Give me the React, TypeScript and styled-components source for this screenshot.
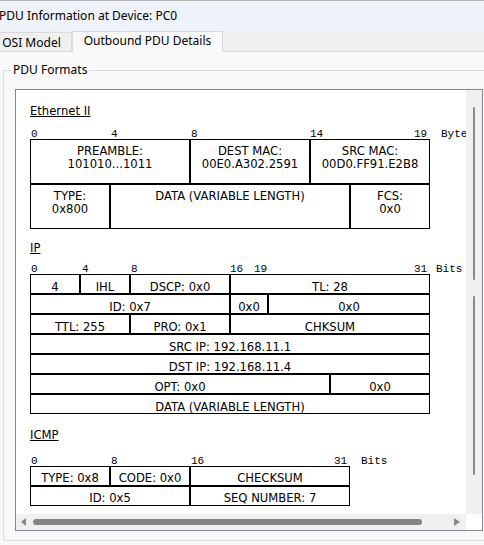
import React from 'react';
import styled, { createGlobalStyle } from 'styled-components';

const GlobalStyle = createGlobalStyle`
  html, body { margin: 0; padding: 0; }
  body { background: #f9f9f9; overflow: hidden; }
  #root { width: 484px; height: 545px; }
`;

const Window = styled.div`
  width: 484px;
  height: 545px;
  display: flex;
  flex-direction: column;
  overflow: hidden;
  font-family: "Noto Sans", "Open Sans", sans-serif;
  font-size: 12px;
  color: #000;
  background: #f9f9f9;
`;

const TitleBar = styled.div`
  height: 30px;
  border-top: 1px solid #b4b4b4;
  background: #eef3f9;
  display: flex;
  align-items: center;
  flex-shrink: 0;
`;

const Title = styled.span`
  margin-left: -1px;
  line-height: 16px;
  white-space: nowrap;
`;

const TabStrip = styled.div`
  height: 20px;
  background: #f0f0f0;
  border-bottom: 1px solid #d9d9d9;
  display: flex;
  align-items: flex-end;
  flex-shrink: 0;
`;

const Tab = styled.div<{ $active?: boolean }>`
  box-sizing: border-box;
  line-height: 16px;
  text-align: center;
  white-space: nowrap;
  border: 1px solid #d9d9d9;
  border-bottom: none;
  ${(p) =>
    p.$active
      ? `
    width: 151px;
    height: 21px;
    padding-top: 1px;
    margin-bottom: -1px;
    background: #f9f9f9;
    position: relative;
  `
      : `
    width: 80px;
    height: 19px;
    padding-top: 2px;
    margin-left: -8px;
    background: #f0f0f0;
    border-left: none;
  `}
`;

const Body = styled.div`
  flex: 1;
  display: flex;
  flex-direction: column;
  padding: 18px 0 4px 3px;
  min-height: 0;
`;

const GroupBox = styled.div`
  position: relative;
  flex: 1;
  display: flex;
  flex-direction: column;
  border: 1px solid #dcdcdc;
  border-right: none;
  border-radius: 2px 0 0 2px;
  padding: 18px 0 9px 11px;
  min-height: 0;
`;

const GroupLabel = styled.span`
  position: absolute;
  top: -9px;
  left: 7px;
  padding: 0 2px;
  line-height: 16px;
  background: #f9f9f9;
`;

const Panel = styled.div`
  width: 468px;
  height: 442px;
  box-sizing: border-box;
  border: 1px solid #828790;
  background: #fff;
  display: grid;
  grid-template-columns: 450px 16px;
  grid-template-rows: 424px 16px;
`;

const Viewport = styled.div`
  overflow: hidden;
  padding: 14px 0 0 14px;
  box-sizing: border-box;
  font-family: "DejaVu Sans", Verdana, sans-serif;
  font-size: 11.6px;
  color: #000;
`;

const Content = styled.div`
  width: 480px;
  display: flex;
  flex-direction: column;
  align-items: flex-start;
`;

const Heading = styled.div<{ $mt: number }>`
  margin-top: ${(p) => p.$mt}px;
  line-height: 14px;
  text-decoration: underline;
  text-underline-offset: 1px;
`;

const Ruler = styled.div<{ $mt: number }>`
  position: relative;
  width: 480px;
  height: 11px;
  margin-top: ${(p) => p.$mt}px;
  font-family: "Liberation Mono", "Courier New", monospace;
  font-size: 11px;
  line-height: 12px;
`;

const Tick = styled.span<{ $x: number }>`
  position: absolute;
  top: 0;
  left: ${(p) => p.$x}px;
  white-space: pre;
`;

const Table = styled.div<{ $mt?: number }>`
  display: flex;
  flex-direction: column;
  margin-top: ${(p) => p.$mt ?? 0}px;
`;

const Row = styled.div`
  display: flex;
`;

const Cell = styled.div<{ $w: number; $h: number; $pt: number }>`
  box-sizing: border-box;
  width: ${(p) => p.$w}px;
  height: ${(p) => p.$h}px;
  border: 1px solid #000;
  padding-top: ${(p) => p.$pt}px;
  text-align: center;
  line-height: 12.5px;
  white-space: nowrap;
  overflow: hidden;
`;

const VScroll = styled.div`
  background: #f0f0f0;
  display: flex;
  flex-direction: column;
  align-items: center;
  padding-top: 17px;
  gap: 16px;
  box-sizing: border-box;
`;

const VThumb = styled.div<{ $h: number }>`
  width: 2px;
  height: ${(p) => p.$h}px;
  background: #8a8a8a;
  border-radius: 1px;
  margin-left: -1px;
`;

const HScroll = styled.div`
  background: #f0f0f0;
  display: flex;
  align-items: center;
  padding-left: 5px;
`;

const Arrow = styled.div<{ $dir: 'left' | 'right' }>`
  width: 0;
  height: 0;
  border-top: 4px solid transparent;
  border-bottom: 4px solid transparent;
  ${(p) =>
    p.$dir === 'left'
      ? 'border-right: 5px solid #8a8a8a;'
      : 'border-left: 6px solid #8a8a8a;'}
`;

const HThumb = styled.div`
  width: 389px;
  height: 6px;
  border-radius: 3px;
  background: #858585;
  margin: 0 32px 0 7px;
`;

const Corner = styled.div`
  background: #fff;
`;

type CellData = { w: number; t: string[] };
type TableData = { h: number; pt: number; rows: CellData[][] };

const ethernet: TableData = {
  h: 45,
  pt: 5,
  rows: [
    [
      { w: 160, t: ['PREAMBLE:', '101010...1011'] },
      { w: 120, t: ['DEST MAC:', '00E0.A302.2591'] },
      { w: 120, t: ['SRC MAC:', '00D0.FF91.E2B8'] },
    ],
    [
      { w: 80, t: ['TYPE:', '0x800'] },
      { w: 240, t: ['DATA (VARIABLE LENGTH)'] },
      { w: 80, t: ['FCS:', '0x0'] },
    ],
  ],
};

const ip: TableData = {
  h: 20,
  pt: 6,
  rows: [
    [
      { w: 50, t: ['4'] },
      { w: 50, t: ['IHL'] },
      { w: 100, t: ['DSCP: 0x0'] },
      { w: 200, t: ['TL: 28'] },
    ],
    [
      { w: 200, t: ['ID: 0x7'] },
      { w: 38, t: ['0x0'] },
      { w: 162, t: ['0x0'] },
    ],
    [
      { w: 100, t: ['TTL: 255'] },
      { w: 100, t: ['PRO: 0x1'] },
      { w: 200, t: ['CHKSUM'] },
    ],
    [{ w: 400, t: ['SRC IP: 192.168.11.1'] }],
    [{ w: 400, t: ['DST IP: 192.168.11.4'] }],
    [
      { w: 300, t: ['OPT: 0x0'] },
      { w: 100, t: ['0x0'] },
    ],
    [{ w: 400, t: ['DATA (VARIABLE LENGTH)'] }],
  ],
};

const icmp: TableData = {
  h: 20,
  pt: 5,
  rows: [
    [
      { w: 80, t: ['TYPE: 0x8'] },
      { w: 80, t: ['CODE: 0x0'] },
      { w: 160, t: ['CHECKSUM'] },
    ],
    [
      { w: 160, t: ['ID: 0x5'] },
      { w: 160, t: ['SEQ NUMBER: 7'] },
    ],
  ],
};

const PduTable: React.FC<{ data: TableData; mt?: number }> = ({ data, mt }) => (
  <Table $mt={mt}>
    {data.rows.map((row, ri) => (
      <Row key={ri}>
        {row.map((c, ci) => (
          <Cell key={ci} $w={c.w} $h={data.h} $pt={data.pt}>
            {c.t.map((line, li) => (
              <div key={li}>{line}</div>
            ))}
          </Cell>
        ))}
      </Row>
    ))}
  </Table>
);

const Ticks: React.FC<{ ticks: [number, string][]; mt: number }> = ({ ticks, mt }) => (
  <Ruler $mt={mt}>
    {ticks.map(([x, s]) => (
      <Tick key={s + x} $x={x}>
        {s}
      </Tick>
    ))}
  </Ruler>
);

export default function App() {
  return (
    <Window>
      <GlobalStyle />
      <TitleBar>
        <Title>PDU Information at Device: PC0</Title>
      </TitleBar>
      <TabStrip>
        <Tab>OSI Model</Tab>
        <Tab $active>Outbound PDU Details</Tab>
      </TabStrip>
      <Body>
        <GroupBox>
          <GroupLabel>PDU Formats</GroupLabel>
          <Panel>
            <Viewport>
              <Content>
                <Heading $mt={0}>Ethernet II</Heading>
                <Ticks
                  mt={10}
                  ticks={[
                    [1, '0'],
                    [81, '4'],
                    [161, '8'],
                    [280, '14'],
                    [384, '19'],
                    [411, 'Bytes'],
                  ]}
                />
                <PduTable data={ethernet} />
                <Heading $mt={12}>IP</Heading>
                <Ticks
                  mt={8}
                  ticks={[
                    [1, '0'],
                    [52, '4'],
                    [101, '8'],
                    [200, '16'],
                    [224, '19'],
                    [384, '31'],
                    [406, 'Bits'],
                  ]}
                />
                <PduTable data={ip} />
                <Heading $mt={14}>ICMP</Heading>
                <Ticks
                  mt={13}
                  ticks={[
                    [1, '0'],
                    [81, '8'],
                    [161, '16'],
                    [304, '31'],
                    [331, 'Bits'],
                  ]}
                />
                <PduTable data={icmp} />
              </Content>
            </Viewport>
            <VScroll>
              <VThumb $h={173} />
              <VThumb $h={179} />
            </VScroll>
            <HScroll>
              <Arrow $dir="left" />
              <HThumb />
              <Arrow $dir="right" />
            </HScroll>
            <Corner />
          </Panel>
        </GroupBox>
      </Body>
    </Window>
  );
}
